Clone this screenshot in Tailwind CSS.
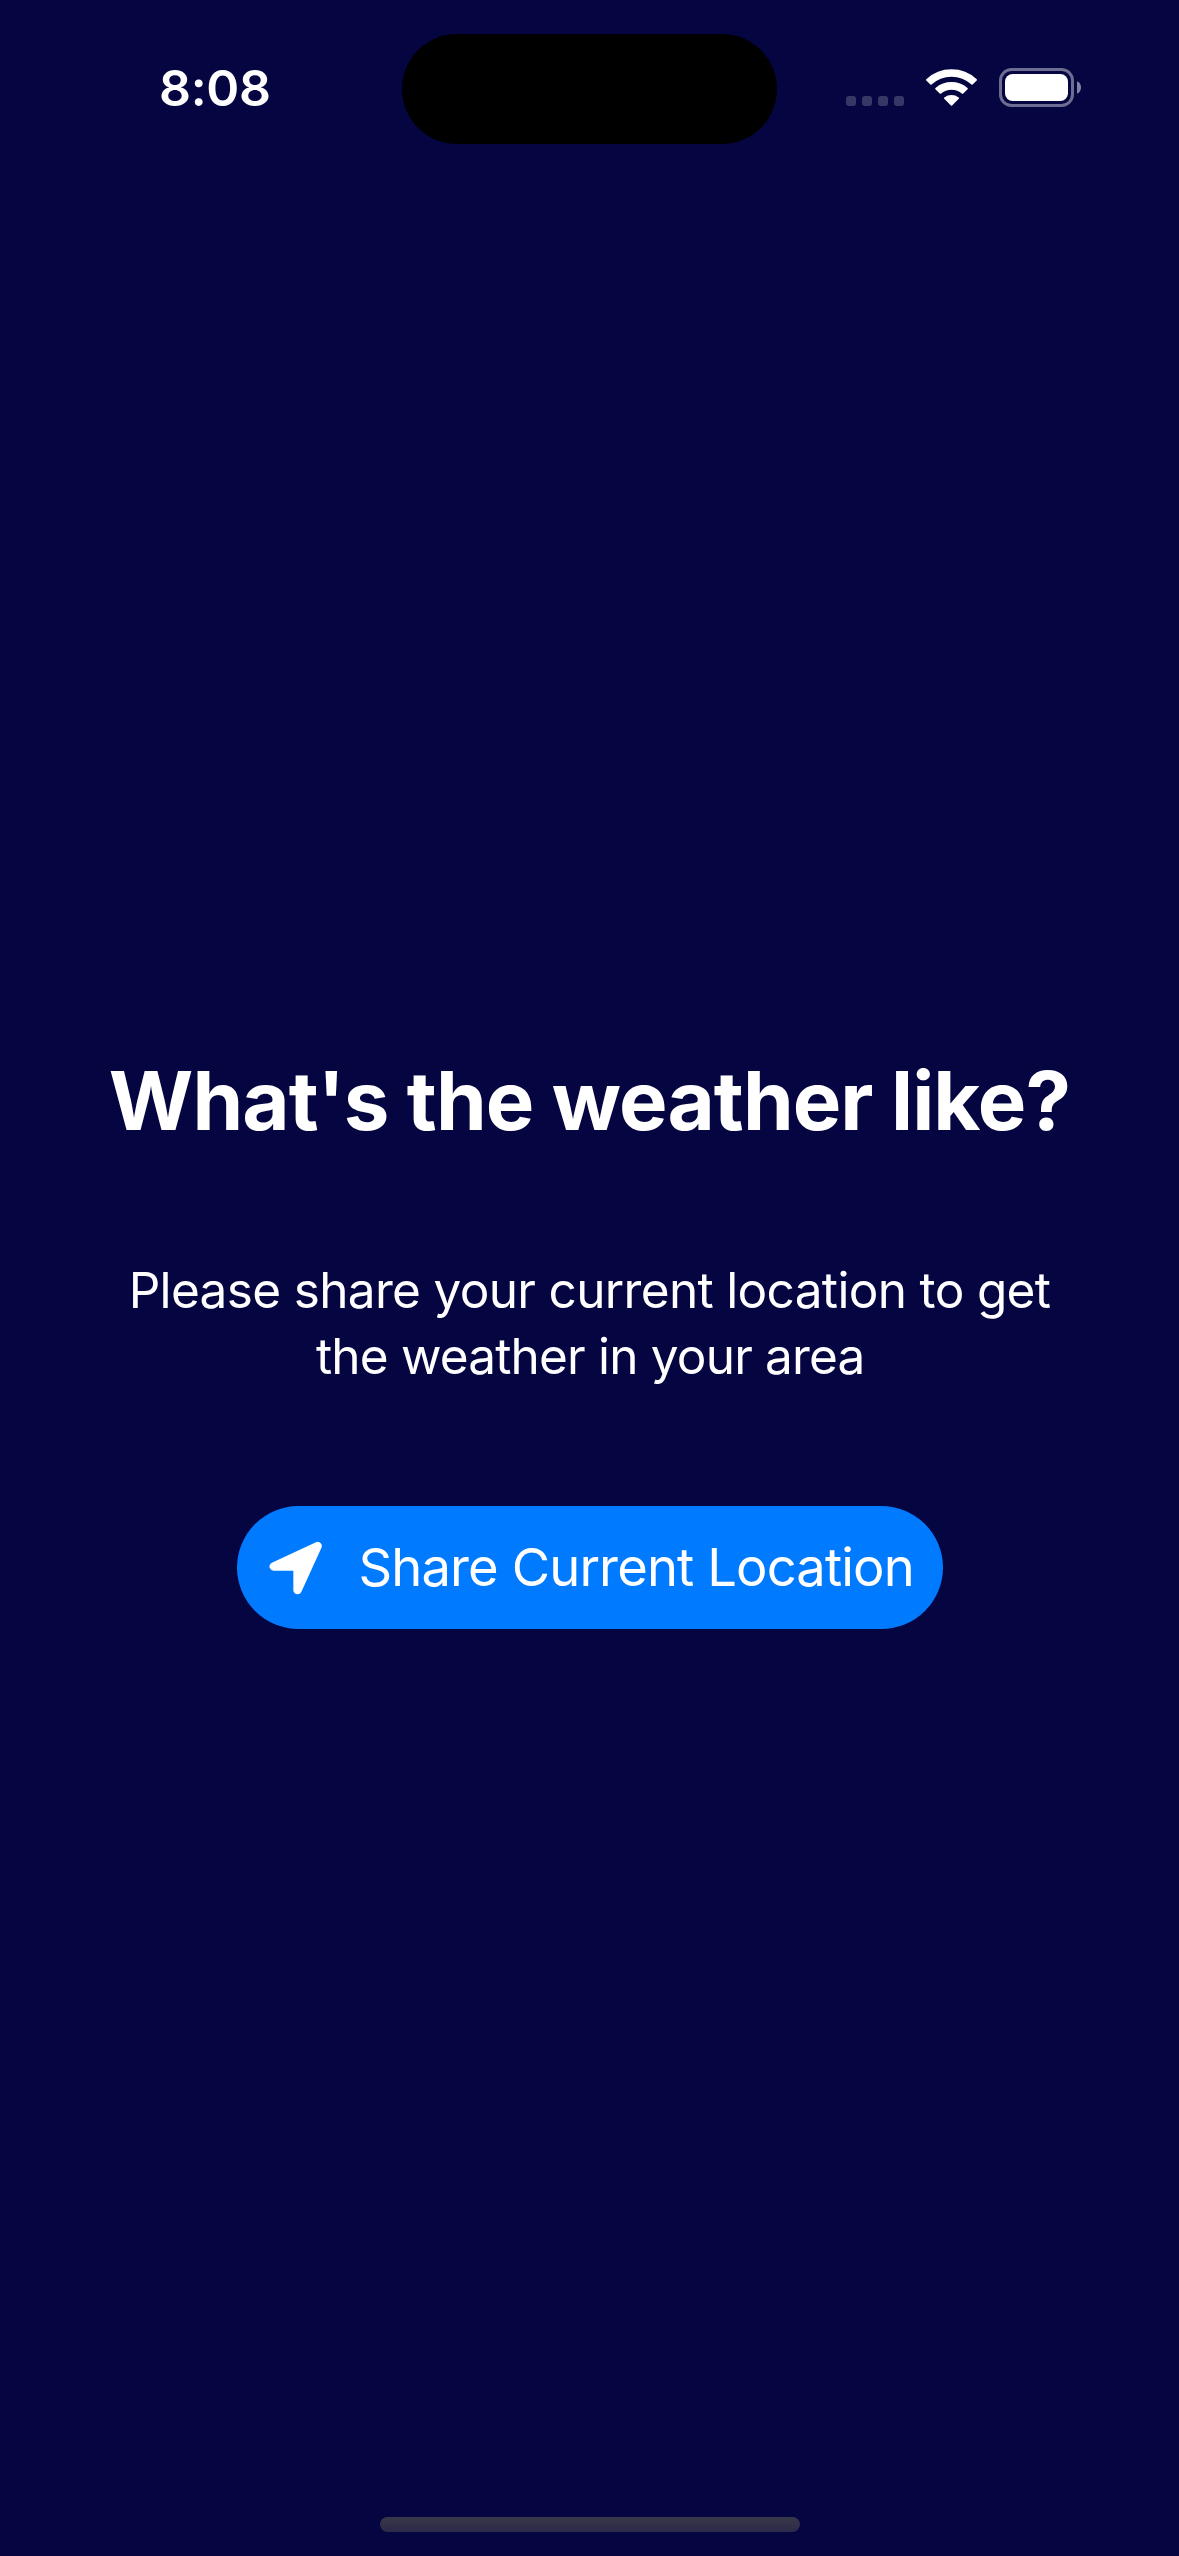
<!DOCTYPE html>
<html lang="en">
<head>
<meta charset="utf-8">
<title>Weather</title>
<script src="https://cdn.jsdelivr.net/npm/@tailwindcss/browser@4"></script>
</head>
<body class="flex h-[2556px] w-[1179px] flex-col overflow-hidden bg-[#050542] font-['Inter',sans-serif] text-white">
  <header class="flex h-[178px] items-center pl-[159px]">
    <div class="w-[243px] pb-[2px] text-[50px] leading-[60px] font-semibold tracking-[-0.3px]">8:08</div>
    <div class="h-[110px] w-[375px] rounded-full bg-black"></div>
    <!-- Signal dots -->
    <div class="mt-[24px] ml-[69px] flex gap-[6px]">
      <span class="size-[10px] rounded-[3px] bg-white/20"></span>
      <span class="size-[10px] rounded-[3px] bg-white/20"></span>
      <span class="size-[10px] rounded-[3px] bg-white/20"></span>
      <span class="size-[10px] rounded-[3px] bg-white/20"></span>
    </div>
    <!-- Wi-Fi -->
    <svg class="mb-[3px] ml-[22px] h-[37px] w-[51px]" viewBox="498 147 153 111" fill="#fff" stroke="#fff" stroke-width="5" stroke-linejoin="round">
      <path d="M500.6 179.5A108.5 108.5 0 0 1 648.4 179.5L636.2 191.7A90.5 90.5 0 0 0 512.8 191.7Z"/>
      <path d="M528 206A71.5 71.5 0 0 1 621 206L608 219A52.5 52.5 0 0 0 541 219Z"/>
      <path d="M554.5 234.5A33 33 0 0 1 594.5 234.5L574.5 254.5Z"/>
    </svg>
    <!-- Battery -->
    <svg class="mb-[3px] ml-[22px] h-[39px] w-[82px]" viewBox="717 144 246 117" fill="#fff">
      <rect x="721.5" y="148.5" width="216" height="108" rx="33" fill="none" stroke="#fff" stroke-opacity=".42" stroke-width="9"/>
      <rect x="735" y="162" width="189" height="81" rx="23"/>
      <path d="M951 184C959 187 963 194 963 202.500S959 218 951 221Z" fill-opacity=".5"/>
    </svg>
  </header>

  <main class="flex flex-1 flex-col items-center pt-[873px] text-center">
    <h1 class="text-[81.5px] leading-[100px] font-bold tracking-[-0.92px] whitespace-nowrap">What's the weather like?</h1>
    <p class="mt-[106px] text-[49.5px] leading-[66px] whitespace-nowrap">
      <span class="block tracking-[-0.66px]">Please share your current location to get</span>
      <span class="block pl-[1.5px] tracking-[-0.81px]">the weather in your area</span>
    </p>
    <button class="mt-[117px] flex h-[123px] w-[706px] items-center rounded-full bg-[#007aff] pl-[32px] text-[52.5px] leading-[63px]">
      <svg class="size-[54px] shrink-0" viewBox="148 152 162 162" fill="#fff" stroke="#fff" stroke-width="25" stroke-linejoin="round">
        <path d="M294 167L162 228.500H233.500V299.500Z"/>
      </svg>
      <span class="ml-[36px] tracking-[-0.87px] whitespace-nowrap">Share Current Location</span>
    </button>
  </main>

  <footer class="flex justify-center pb-[24px] pl-[1px]">
    <div class="h-[15px] w-[420px] rounded-full bg-linear-to-b from-[#383849] to-[#2d2949]"></div>
  </footer>
</body>
</html>
